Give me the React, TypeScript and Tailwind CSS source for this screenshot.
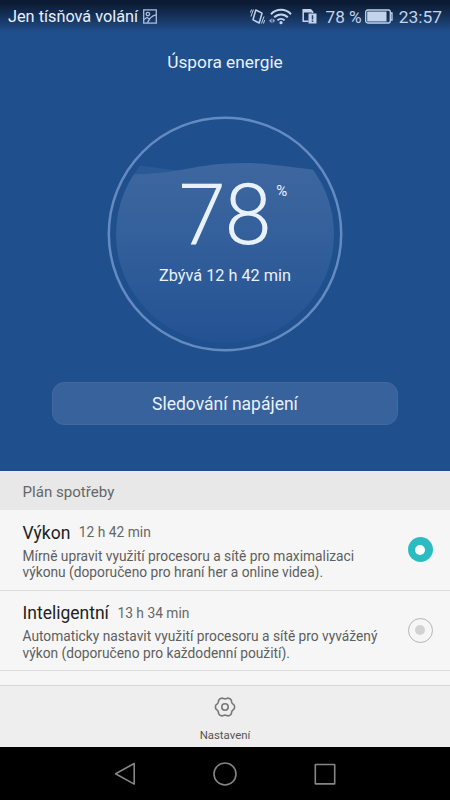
import type { ReactNode } from 'react';

type Plan = {
  name: string;
  time: string;
  lines: string[];
  selected: boolean;
};

const plans: Plan[] = [
  {
    name: 'Výkon',
    time: '12 h 42 min',
    lines: ['Mírně upravit využití procesoru a sítě pro maximalizaci', 'výkonu (doporučeno pro hraní her a online videa).'],
    selected: true,
  },
  {
    name: 'Inteligentní',
    time: '13 h 34 min',
    lines: ['Automaticky nastavit využití procesoru a sítě pro vyvážený', 'výkon (doporučeno pro každodenní použití).'],
    selected: false,
  },
];

// Six-lobed outline of the settings gear
const gearPoints = Array.from({ length: 72 }, (_, i) => {
  const a = (i * Math.PI) / 36;
  const r = 8.7 + 0.95 * Math.tanh(1.1 * Math.cos(6 * a) + 0.4);
  return `${(11 + r * Math.cos(a)).toFixed(2)},${(11 + r * Math.sin(a)).toFixed(2)}`;
}).join(' ');

function StatusBar() {
  return (
    <div className="flex h-8 items-center justify-between bg-linear-to-b from-[#0c1b33] from-10% to-[#204f8d] pr-[8px] pl-2 text-[#c3d3ea]">
      <div className="flex items-center gap-[5px]">
        <span className="mt-[2px] text-[16.3px] leading-8 text-[#e8f0fc]">Jen tísňová volání</span>
        <svg width="14" height="15" viewBox="0 0 14 15" fill="none" stroke="#a9bddb" strokeWidth="1.3">
          <rect x="0.7" y="0.9" width="12.6" height="13.2" />
          <circle cx="4.9" cy="5" r="1.7" />
          <path d="M1 10.5 4 8.5 6.5 10M4.5 14C6 9.5 9 6.7 13 5.8" />
        </svg>
      </div>
      <div className="flex items-center">
        <svg width="15" height="17" viewBox="0 0 15 17" fill="none" stroke="currentColor" strokeLinejoin="round">
          <path d="M5.8 2 12 5.2 9.2 15 3 11.8Z" strokeWidth="1.5" />
          <path d="M3.4 1.5.9 8.5M1.5 1.5.5 4.5M14 8.5 11.5 15.5M14.6 12 13.5 15.5" strokeWidth="1" />
        </svg>
        <svg className="ml-[4px]" width="23" height="17" viewBox="0 0 23 17" fill="none" stroke="currentColor">
          <path d="M2 6.2C7.5.4 16.5.4 22 6.2" strokeWidth="2" />
          <path d="M5.2 9.3C9 5.5 15 5.5 18.8 9.3" strokeWidth="2" />
          <path d="M8.4 12.4C10.4 10.4 13.6 10.4 15.6 12.4" strokeWidth="2" />
          <circle cx="12" cy="14.7" r="1.6" fill="currentColor" stroke="none" />
          <path d="M0 12.8 2.6 10.2V15.2ZM6.2 12.8 3.6 10.2V15.2Z" fill="currentColor" stroke="none" opacity=".7" />
        </svg>
        <svg className="ml-[10px]" width="15" height="16" viewBox="0 0 15 16" fill="none" stroke="currentColor">
          <path d="M6.5 13.3H1.2V1.7H8.5L10.5 3.7V5" strokeWidth="1.5" />
          <path d="M1 4.5V1H8.5L11.2 3.7V4.5Z" fill="currentColor" stroke="none" />
          <rect x="6.5" y="5.5" width="8" height="10" fill="currentColor" stroke="none" />
          <path d="M10.5 7.2V11.5M10.5 12.5V14" stroke="#24466f" strokeWidth="1.5" />
        </svg>
        <span className="mt-[1px] ml-[9px] text-[17.2px] leading-8">78 %</span>
        <svg className="ml-[3px]" width="28" height="15" viewBox="0 0 28 15" fill="none" stroke="currentColor">
          <rect x="0.7" y="1" width="24.6" height="13" rx="2" strokeWidth="1.3" />
          <rect x="2.2" y="2.5" width="19.3" height="10" fill="currentColor" stroke="none" />
          <path d="M25.5 4H27V11H25.5" strokeWidth="1.3" />
        </svg>
        <span className="mt-[1px] ml-[6px] text-[17.4px] leading-8">23:57</span>
      </div>
    </div>
  );
}

function BatteryGauge() {
  return (
    <div className="relative mx-auto mt-[42px] h-[236px] w-[236px]">
      <svg className="absolute inset-0" width="236" height="236" viewBox="0 0 236 236">
        <defs>
          <linearGradient id="water" x1="0" y1="46" x2="0" y2="227" gradientUnits="userSpaceOnUse">
            <stop offset="0" stopColor="#3e679f" />
            <stop offset="0.5" stopColor="#315e9a" />
            <stop offset="1" stopColor="#235293" />
          </linearGradient>
          <clipPath id="disc">
            <circle cx="118" cy="118" r="109" />
          </clipPath>
        </defs>
        <g clipPath="url(#disc)">
          <path d="M0 48C26 47 50 52 75 55L75 62H0Z" fill="#2b5995" />
          <path d="M0 58C75 61 80 47 138 47C170 47 190 54 236 55V236H0Z" fill="url(#water)" />
        </g>
        <circle cx="118" cy="118" r="116.2" fill="none" stroke="#638bc2" strokeWidth="2.5" />
      </svg>
      <div className="relative flex flex-col items-center text-[#e9f1fd]">
        <div className="relative mt-[49px] mr-[1px] text-[85px] leading-[100px] font-light tracking-[-1.5px]">
          78
          <span className="absolute top-[16px] left-full ml-[6px] text-[15px] leading-5 font-normal tracking-normal">%</span>
        </div>
        <div className="mt-px text-[16.3px] leading-5">Zbývá 12 h 42 min</div>
      </div>
    </div>
  );
}

function Radio({ selected }: { selected: boolean }) {
  if (selected) {
    return (
      <div className="flex size-[25px] items-center justify-center rounded-full bg-[#2bbcc1]">
        <div className="size-[10px] rounded-full bg-white" />
      </div>
    );
  }
  return (
    <div className="flex size-[25px] items-center justify-center rounded-full border border-[#b5b5b5]">
      <div className="size-[10px] rounded-full bg-[#d2d2d2]" />
    </div>
  );
}

function PlanRow({ plan }: { plan: Plan }) {
  return (
    <div className="flex h-[80.5px] items-center justify-between border-b border-[#dcdcdc] pr-[17.5px] pl-[22.5px]">
      <div className="pt-[2px]">
        <div className="flex items-center gap-[8.5px] leading-6">
          <span className="text-[17.5px] text-[#222]">{plan.name}</span>
          <span className="-mt-px text-[13.8px] text-[#666]">{plan.time}</span>
        </div>
        <div className="mt-[3px] text-[13.75px] leading-[16.5px] whitespace-nowrap text-[#5e5e5e]">
          {plan.lines.map((line) => (
            <p key={line}>{line}</p>
          ))}
        </div>
      </div>
      <Radio selected={plan.selected} />
    </div>
  );
}

function NavButton({ children }: { children: ReactNode }) {
  return (
    <button className="flex w-[100px] items-center justify-center">
      <svg width="26" height="26" viewBox="0 0 26 26" fill="none" stroke="#858585" strokeWidth="1.6" strokeLinejoin="round">
        {children}
      </svg>
    </button>
  );
}

export default function App() {
  return (
    <div className="flex h-[800px] w-[450px] flex-col overflow-hidden bg-[#f6f6f6] font-[Roboto,sans-serif]">
      <div className="h-[471px] shrink-0 bg-[#1f4f8d]">
        <StatusBar />
        <h1 className="mt-[18px] text-center text-[17.3px] leading-6 text-[#e9f1fd]">Úspora energie</h1>
        <BatteryGauge />
        <button className="mx-auto mt-[30px] flex h-[43px] w-[346px] items-center justify-center rounded-[12px] border border-[#42699f] bg-[#37629b] pt-[2px] text-[17.5px] text-[#e9f1fd]">
          Sledování napájení
        </button>
      </div>
      <div className="flex h-[39px] shrink-0 items-center bg-[#e8e8e8] pl-[22.5px] text-[15.1px] text-[#666]">
        <span className="mt-[3px]">Plán spotřeby</span>
      </div>
      <div className="h-[175px] shrink-0 overflow-hidden">
        {plans.map((plan) => (
          <PlanRow key={plan.name} plan={plan} />
        ))}
      </div>
      <button className="flex h-[62px] shrink-0 flex-col items-center border-t border-[#d6d6d6] bg-[#eeeeee]">
        <svg className="mt-[10px]" width="22" height="22" viewBox="0 0 22 22" fill="none" stroke="#777" strokeWidth="1.6" strokeLinejoin="round">
          <polygon points={gearPoints} />
          <circle cx="11" cy="11" r="3.2" />
        </svg>
        <span className="mt-[9px] text-[11.4px] leading-4 text-[#555]">Nastavení</span>
      </button>
      <nav className="flex h-[53px] shrink-0 justify-center bg-black">
        <NavButton>
          <path d="M3.6 12.8 22.2 2.5V23.1Z" />
        </NavButton>
        <NavButton>
          <circle cx="13" cy="13" r="11" />
        </NavButton>
        <NavButton>
          <rect x="3.3" y="3.5" width="19.4" height="19.4" rx="0.5" />
        </NavButton>
      </nav>
    </div>
  );
}
